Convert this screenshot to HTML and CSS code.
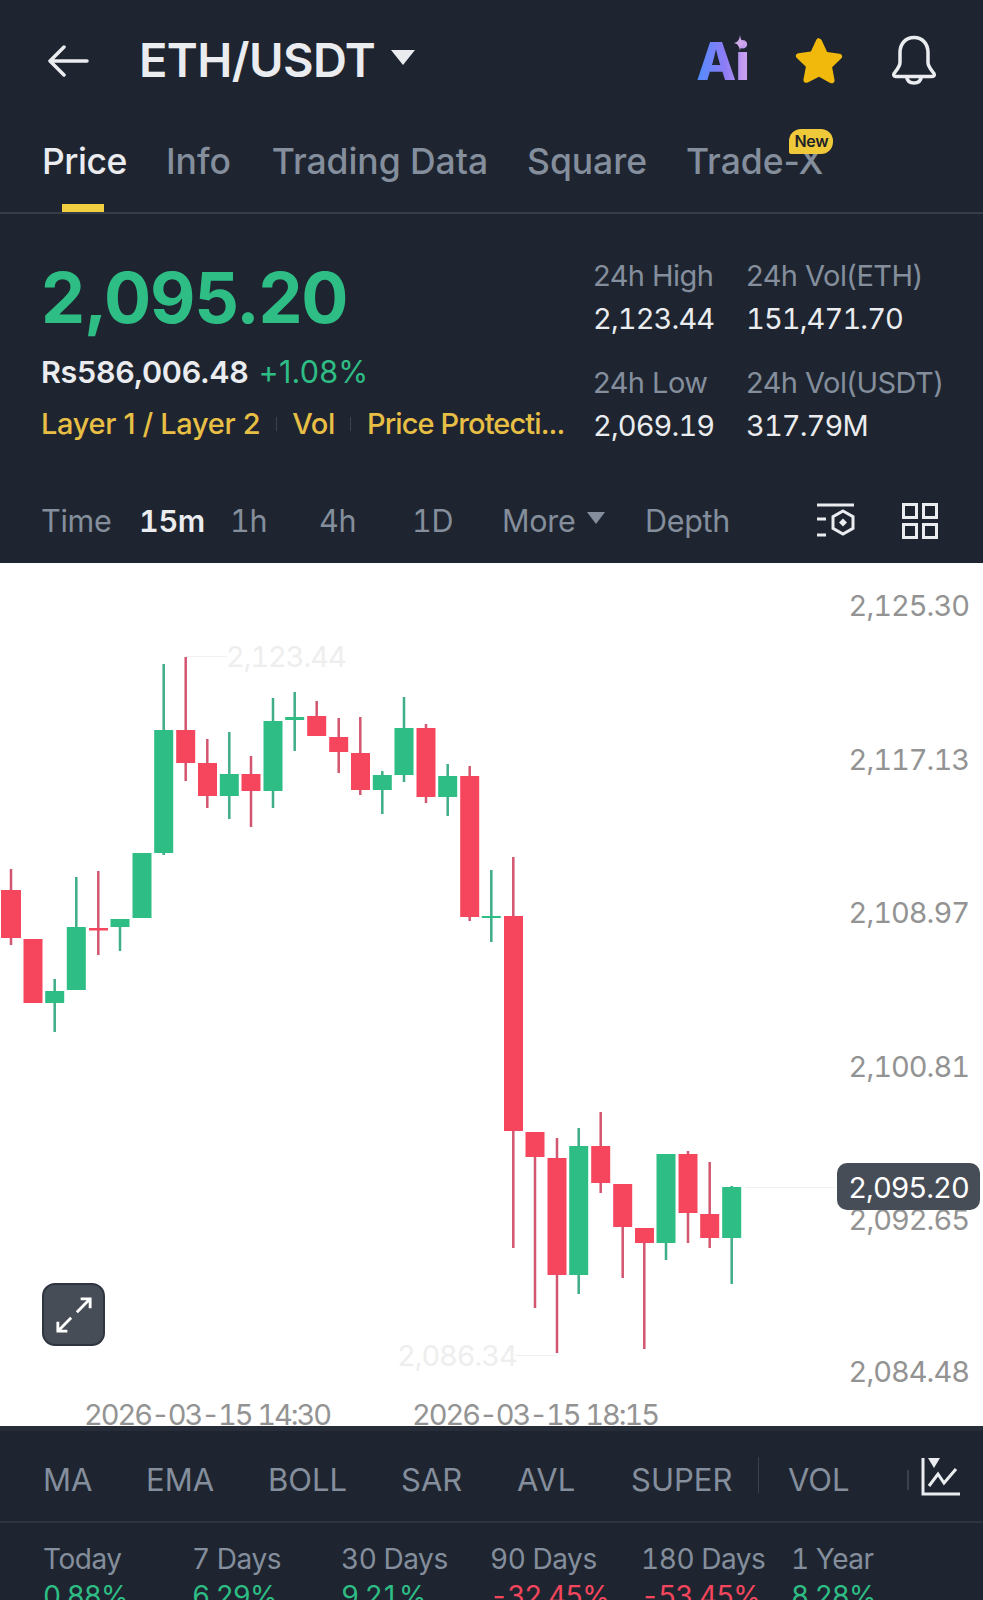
FILE: index.html
```html
<!DOCTYPE html>
<html lang="en">
<head>
<meta charset="utf-8">
<title>ETH/USDT</title>
<link rel="stylesheet" href="styles.css">
</head>
<body>
<div class="page">
  <header class="topbar">
    <svg class="back" viewBox="0 0 42 32" width="42" height="32"><path d="M40 16H3M17 2 3 16l14 14" /></svg>
    <h1 class="pair">ETH/USDT</h1>
    <span class="caret"></span>
    <span class="ai">Ai<svg class="spark" viewBox="0 0 12 16" width="12" height="16"><path d="M6 0c.6 4.600 1.800 6.800 6 8-4.200 1.200-5.400 3.400-6 8-.6-4.600-1.800-6.800-6-8 4.200-1.200 5.400-3.400 6-8Z"/></svg></span>
    <svg class="star" viewBox="0 0 48 48" width="48" height="48"><path d="M24 2.500c1.300 0 2.200.8 2.800 2.100l5.300 11.500 12.400 1.600c2.700.4 3.600 3 1.700 4.900l-9.100 8.700 2.400 12.500c.5 2.700-1.900 4.400-4.300 3.100L24 40.700l-11.200 5.700c-2.400 1.300-4.800-.4-4.300-3.100l2.400-12.500-9.100-8.700c-1.900-1.900-1-4.500 1.700-4.900l12.400-1.600 5.300-11.500c.6-1.300 1.500-2.100 2.800-2.100Z"/></svg>
    <svg class="bell" viewBox="0 0 48 50" width="48" height="50"><path d="M24 2.500c-9 0-14 7-14 15v10c0 4-3 7-6 11-.8 1.500 0 3 1.800 3h36.400c1.800 0 2.600-1.500 1.800-3-3-4-6-7-6-11v-10c0-8-5-15-14-15ZM16.500 41.500c.6 4.500 3.600 6.500 7.500 6.500s6.900-2 7.500-6.500"/></svg>
  </header>

  <nav class="tabs">
    <span class="tab tab-on">Price</span>
    <span class="tab tab-info">Info</span>
    <span class="tab">Trading Data</span>
    <span class="tab">Square</span>
    <span class="tab tab-x">Trade-X<em class="badge">New</em></span>
  </nav>

  <section class="stats">
    <div class="stats-left">
      <div class="price">2,095.20</div>
      <div class="fiat"><span class="rs">Rs586,006.48</span><span class="pct">+1.08%</span></div>
      <div class="tags"><span>Layer 1 / Layer 2</span><i class="tag-sep"></i><span>Vol</span><i class="tag-sep"></i><span class="tag-long">Price Protecti...</span></div>
    </div>
    <dl class="stat-grid">
      <div><dt>24h High</dt><dd>2,123.44</dd></div>
      <div><dt>24h Vol(ETH)</dt><dd>151,471.70</dd></div>
      <div><dt>24h Low</dt><dd>2,069.19</dd></div>
      <div><dt>24h Vol(USDT)</dt><dd>317.79M</dd></div>
    </dl>
  </section>

  <div class="timebar">
    <span>Time</span>
    <span class="time-on">15m</span>
    <span>1h</span>
    <span>4h</span>
    <span>1D</span>
    <span class="more">More<b class="caret-small"></b></span>
    <span>Depth</span>
    <svg class="tool" viewBox="0 0 40 38" width="40" height="38"><path d="M1 3h37M1 17h9M1 33h9"/><path d="M27 9l10 5.700v11.600L27 32l-10-5.700V14.700Z"/><path class="fill" d="M27 16.500l4 4-4 4-4-4Z"/></svg>
    <svg class="tool" viewBox="0 0 36 36" width="36" height="36"><path d="M1.500 1.500h13v13h-13ZM21.500 1.500h13v13h-13ZM1.500 21.500h13v13h-13ZM21.500 21.500h13v13h-13Z"/></svg>
  </div>

  <div class="chart">
    <svg class="candles" viewBox="0 563 983 863" width="983" height="863">
      <path class="ghost-line" d="M186 656.500H227M515 1355.500H557M745 1187.500H835"/>
      <g class="down">
        <path d="M11 869V945M185.700 657V781M207.300 739V808M251 756V827M316.700 701V736M338.700 718V773M360.300 717V795M426 724V803M469.700 766V921M513.300 857V1248M535 1132V1308M557 1138V1353M600.700 1112V1193M622.700 1184V1278M644.300 1228V1349M688 1151V1243M709.700 1162V1248M98.300 871V955"/>
        <rect x="1" y="890" width="20" height="48"/><rect x="23.500" y="939" width="19" height="64"/><rect x="89" y="928" width="19" height="2.500"/><rect x="176.200" y="730" width="19" height="33"/><rect x="198" y="763" width="19" height="33"/><rect x="241.500" y="774" width="19" height="17"/><rect x="307.200" y="716" width="19" height="20"/><rect x="329.200" y="737" width="19" height="15"/><rect x="351" y="753" width="19" height="37"/><rect x="416.500" y="728" width="19" height="69"/><rect x="460.200" y="776" width="19" height="141"/><rect x="504" y="916" width="19" height="215"/><rect x="525.500" y="1132" width="19" height="25"/><rect x="547.500" y="1158" width="19" height="117"/><rect x="591.200" y="1146" width="19" height="37"/><rect x="613.200" y="1184" width="19" height="43"/><rect x="635" y="1228" width="19" height="15"/><rect x="678.500" y="1154" width="19" height="59"/><rect x="700.200" y="1214" width="19" height="24"/>
      </g>
      <g class="up">
        <path d="M54.700 979V1032M76.300 877V927M120 927V951M163.700 664V855M229.300 732V819M273 698V808M294.700 692V751M382.300 771V814M404 697V782M447.700 764V816M491.300 870V942M578.700 1128V1294M666 1243V1260M731.700 1186V1284"/>
        <rect x="45.200" y="991" width="19" height="12"/><rect x="66.800" y="927" width="19" height="63"/><rect x="110.500" y="919" width="19" height="8"/><rect x="132.500" y="853" width="19" height="65"/><rect x="154.200" y="730" width="19" height="123"/><rect x="219.800" y="774" width="19" height="22"/><rect x="263.500" y="721" width="19" height="70"/><rect x="285.200" y="717" width="19" height="3"/><rect x="372.800" y="775" width="19" height="15"/><rect x="394.500" y="728" width="19" height="47"/><rect x="438.200" y="776" width="19" height="21"/><rect x="481.800" y="916" width="19" height="2"/><rect x="569.200" y="1146" width="19" height="129"/><rect x="656.500" y="1154" width="19" height="89"/><rect x="722.200" y="1187" width="19" height="51"/>
      </g>
      <text class="ghost" x="226" y="667">2,123.44</text>
      <text class="ghost" x="397" y="1366">2,086.34</text>
      <g class="axis">
        <text x="969" y="616">2,125.30</text>
        <text x="969" y="770">2,117.13</text>
        <text x="969" y="923">2,108.97</text>
        <text x="969" y="1077">2,100.81</text>
        <text x="969" y="1230">2,092.65</text>
        <text x="969" y="1382">2,084.48</text>
      </g>
      <text class="date" x="84" y="1425">2026-03-15 14:30</text>
      <text class="date" x="412" y="1425">2026-03-15 18:15</text>
    </svg>
    <div class="last-price">2,095.20</div>
    <button class="expand" type="button" aria-label="Expand">
      <svg viewBox="0 0 40 40" width="40" height="40"><path d="M23 17 37 3M27 3h10v10M17 23 3 37M3 27v10h10"/></svg>
    </button>
  </div>

  <div class="indicators">
    <span>MA</span>
    <span>EMA</span>
    <span>BOLL</span>
    <span>SAR</span>
    <span>AVL</span>
    <span class="ind-super">SUPER</span>
    <span>VOL</span>
    <i class="ind-fade"></i>
    <svg class="ind-icon" viewBox="0 0 40 40" width="40" height="40"><path d="M2 1v36h37"/><path d="M8 29l9-12 6 9 12-14"/><path class="fill" d="M7 1h12l-6 10Z"/></svg>
  </div>

  <div class="perf">
    <div><span>Today</span><b class="gain">0.88%</b></div>
    <div><span>7 Days</span><b class="gain">6.29%</b></div>
    <div><span>30 Days</span><b class="gain">9.21%</b></div>
    <div><span>90 Days</span><b class="loss">-32.45%</b></div>
    <div><span>180 Days</span><b class="loss">-53.45%</b></div>
    <div><span>1 Year</span><b class="gain">8.28%</b></div>
  </div>
</div>
</body>
</html>
```

FILE: styles.css
```css
* { box-sizing: border-box; }
html, body { margin: 0; background: #1e2530; }
body { width: 983px; height: 1600px; overflow: hidden; font-family: Inter, "Liberation Sans", sans-serif; }
.page { width: 983px; height: 1600px; overflow: hidden; background: #1e2530; color: #eaecef; }

.topbar { height: 123px; padding: 36px 0 0 47px; display: flex; align-items: flex-start; }
.back { margin-top: 9px; fill: none; stroke: #eaecef; stroke-width: 3.5; stroke-linecap: round; stroke-linejoin: round; }
.pair { margin: -1px 0 0 50px; font-size: 47px; line-height: 50px; font-weight: 600; letter-spacing: -.6px; color: #eaecef; }
.caret { margin: 14px 0 0 16px; border-left: 12px solid transparent; border-right: 12px solid transparent; border-top: 15px solid #eaecef; }
.ai { position: relative; margin: 1px 0 0 281px; font-size: 52px; line-height: 50px; font-weight: 800; letter-spacing: -1px; background: linear-gradient(90deg, #4f8dff, #8d7cf5 55%, #d3a6ee); -webkit-background-clip: text; background-clip: text; color: transparent; }
.spark { position: absolute; right: 3px; top: -2px; fill: #cfa9ea; }
.star { margin: 0 0 0 46px; fill: #f0b90b; }
.bell { margin: -1px 0 0 47px; fill: none; stroke: #eaecef; stroke-width: 3.500; stroke-linejoin: round; stroke-linecap: round; }

.tabs { height: 91px; padding-left: 42px; display: flex; gap: 39px; border-bottom: 2px solid #363d49; font-size: 35.500px; line-height: 48px; color: #848e9c; font-weight: 500; }
.tab { position: relative; height: 89px; padding-top: 15px; letter-spacing: -.05px; }
.tab-on { color: #eaecef; letter-spacing: -.45px; }
.tab-info { margin-right: 2px; }
.tab-on::after { content: ""; position: absolute; left: 20px; bottom: 0; width: 42px; height: 8px; background: #f0d042; }
.badge { position: absolute; right: -10px; top: 6px; width: 44px; height: 25px; border-radius: 12px 12px 12px 2px; background: #f0c93a; color: #1e2329; font-style: normal; font-size: 16px; line-height: 25px; text-align: center; font-weight: 600; letter-spacing: -.3px; }

.stats { display: flex; height: 262px; padding: 0 0 0 41px; }
.stats-left { width: 552px; }
.price { margin-top: 44px; font-size: 70px; line-height: 80px; font-weight: 700; letter-spacing: -1.2px; color: #2ebd85; }
.fiat { margin-top: 14px; display: flex; gap: 10px; font-size: 30.500px; line-height: 40px; }
.rs { font-weight: 600; color: #eaecef; letter-spacing: -.3px; }
.pct { color: #2ebd85; letter-spacing: .2px; }
.tags { margin-top: 12px; display: flex; align-items: center; gap: 15.500px; font-size: 29px; line-height: 40px; color: #e8bf45; font-weight: 500; letter-spacing: -.35px; white-space: nowrap; }
.tag-long { letter-spacing: -.9px; }
.tag-sep { width: 1px; height: 14px; background: #3d4450; }
.stat-grid { margin: 42px 0 0; display: grid; grid-template-columns: 153px 1fr; grid-auto-rows: 107px; font-size: 29px; line-height: 40px; }
.stat-grid div { margin: 0; }
.stat-grid dt { color: #848e9c; letter-spacing: -.55px; white-space: nowrap; }
.stat-grid dd { margin: 3px 0 0; color: #eaecef; font-variant-numeric: tabular-nums; letter-spacing: -.9px; }

.timebar { height: 87px; display: grid; grid-template-columns: 98px 91px 89px 93px 90px 143px 171px 86px 36px; padding-left: 41px; align-items: center; font-size: 30.500px; color: #848e9c; padding-top: 2px; font-variant-numeric: tabular-nums; letter-spacing: -.3px; }
.time-on { color: #eaecef; font-weight: 600; }
.more { display: flex; align-items: center; gap: 12px; }
.caret-small { border-left: 9px solid transparent; border-right: 9px solid transparent; border-top: 12px solid #848e9c; margin-top: -6px; }
.tool { fill: none; stroke: #eaecef; stroke-width: 3; }
.tool .fill { fill: #eaecef; stroke: none; }

.chart { position: relative; height: 863px; background: #fff; overflow: hidden; }
.candles { display: block; font-family: Inter, "Liberation Sans", sans-serif; }
.up { fill: #2ebd85; stroke: none; }
.down { fill: #f6465d; stroke: none; }
.up path { fill: none; stroke: #3fae87; stroke-width: 2.5; }
.down path { fill: none; stroke: #d2566f; stroke-width: 2.5; }
.ghost-line { fill: none; stroke: #f0f0f0; stroke-width: 1; }
.ghost { font-size: 29px; fill: #eeeeee; font-variant-numeric: tabular-nums; letter-spacing: -1.1px; }
.axis text { font-size: 29px; fill: #939393; text-anchor: end; font-variant-numeric: tabular-nums; letter-spacing: -1px; }
.date { font-size: 29px; fill: #939393; font-variant-numeric: tabular-nums; letter-spacing: -2.05px; }
.last-price { position: absolute; left: 837px; top: 600px; width: 143px; height: 47px; border-radius: 10px; background: #474d57; color: #fff; font-size: 29px; line-height: 49px; text-align: center; font-variant-numeric: tabular-nums; letter-spacing: -1px; }
.expand { position: absolute; left: 42px; top: 720px; width: 63px; height: 63px; padding: 0; border: 2px solid #2f3540; border-radius: 13px; background: #474d57; display: flex; align-items: center; justify-content: center; }
.expand svg { fill: none; stroke: #fff; stroke-width: 3; width: 38px; height: 38px; }

.indicators { height: 97px; padding-top: 7px; border-top: 5px solid #262d38; border-bottom: 2px solid #2c3440; display: grid; grid-template-columns: 103px 122px 133px 116px 114px 157px 119px 14px 40px; padding-left: 43px; align-items: center; font-size: 31px; color: #848e9c; }
.ind-super { position: relative; }
.ind-super::after { content: ""; position: absolute; left: 127px; top: -4px; width: 1px; height: 36px; background: #3a424d; }
.ind-fade { width: 2px; height: 20px; background: #39414d; }
.ind-icon { fill: none; stroke: #eaecef; stroke-width: 3; margin-top: -6px; }
.ind-icon .fill { fill: #eaecef; stroke: none; }

.perf { display: grid; grid-template-columns: 149px 149px 149px 151px 150px 1fr; padding: 19px 0 0 43px; font-size: 28px; line-height: 34px; color: #848e9c; font-variant-numeric: tabular-nums; }
.perf div { display: flex; flex-direction: column; gap: 3px; }
.perf span { letter-spacing: -.45px; }
.perf b { font-weight: 400; letter-spacing: -1px; }
.gain { color: #2ebd85; }
.loss { color: #f6465d; }
```
